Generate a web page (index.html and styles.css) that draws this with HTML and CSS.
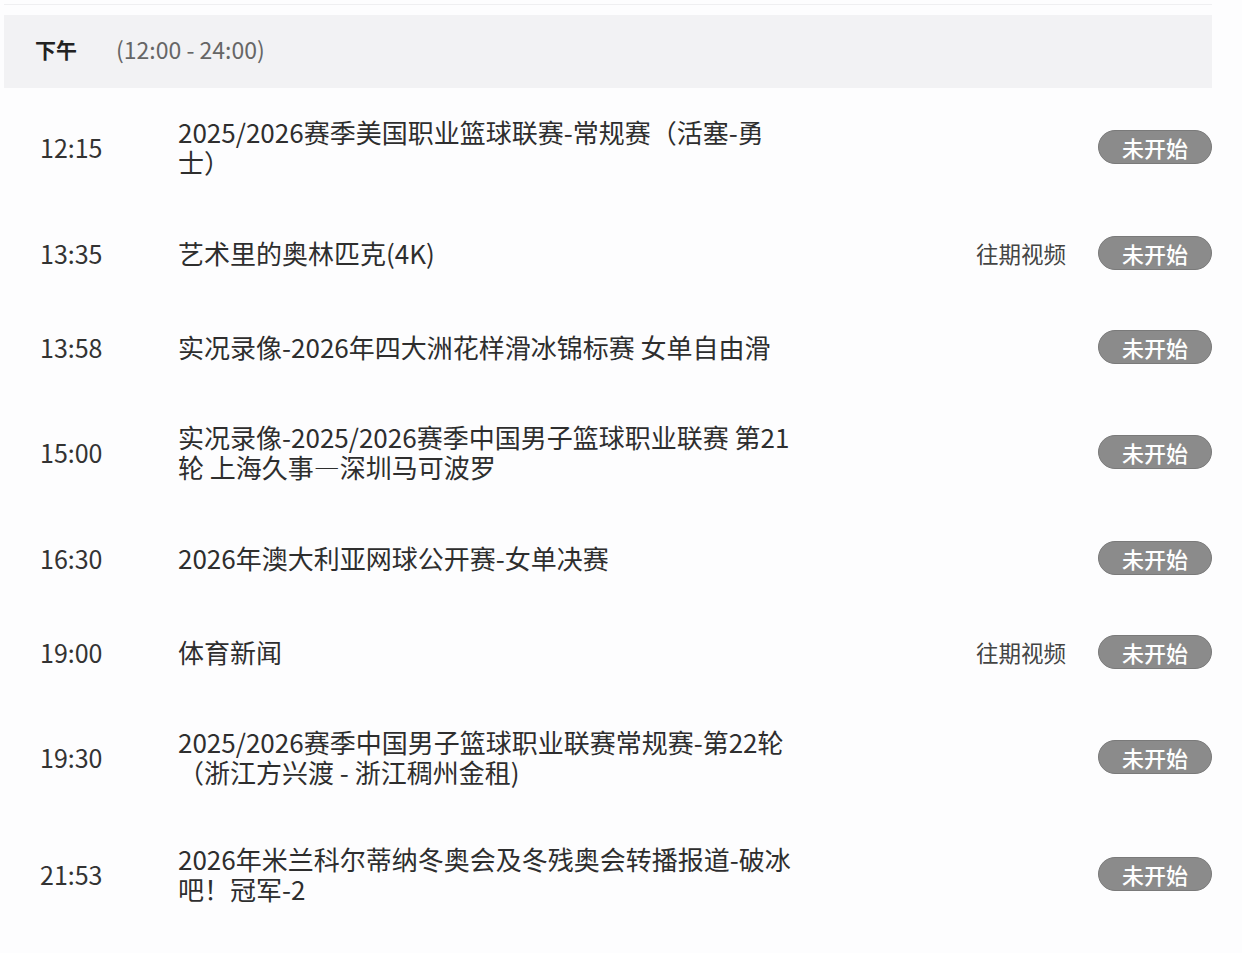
FILE: index.html
```html
<!DOCTYPE html>
<html lang="zh-CN">
<head>
<meta charset="utf-8">
<title>节目单</title>
<link rel="stylesheet" href="styles.css">
</head>
<body>
<div class="page">
  <div class="schedule">
    <div class="period">
      <span class="period-name">下午</span>
      <span class="period-range">(12:00 - 24:00)</span>
    </div>
    <ul class="list">
      <li class="row">
        <span class="time">12:15</span>
        <span class="title">2025/2026赛季美国职业篮球联赛-常规赛（活塞-勇士）</span>
        <span class="extra"></span>
        <span class="badge">未开始</span>
      </li>
      <li class="row">
        <span class="time">13:35</span>
        <span class="title">艺术里的奥林匹克(4K)</span>
        <span class="extra">往期视频</span>
        <span class="badge">未开始</span>
      </li>
      <li class="row">
        <span class="time">13:58</span>
        <span class="title">实况录像-2026年四大洲花样滑冰锦标赛 女单自由滑</span>
        <span class="extra"></span>
        <span class="badge">未开始</span>
      </li>
      <li class="row">
        <span class="time">15:00</span>
        <span class="title">实况录像-2025/2026赛季中国男子篮球职业联赛 第21轮 上海久事—深圳马可波罗</span>
        <span class="extra"></span>
        <span class="badge">未开始</span>
      </li>
      <li class="row">
        <span class="time">16:30</span>
        <span class="title">2026年澳大利亚网球公开赛-女单决赛</span>
        <span class="extra"></span>
        <span class="badge">未开始</span>
      </li>
      <li class="row">
        <span class="time">19:00</span>
        <span class="title">体育新闻</span>
        <span class="extra">往期视频</span>
        <span class="badge">未开始</span>
      </li>
      <li class="row">
        <span class="time">19:30</span>
        <span class="title">2025/2026赛季中国男子篮球职业联赛常规赛-第22轮（浙江方兴渡 - 浙江稠州金租)</span>
        <span class="extra"></span>
        <span class="badge">未开始</span>
      </li>
      <li class="row">
        <span class="time">21:53</span>
        <span class="title">2026年米兰科尔蒂纳冬奥会及冬残奥会转播报道-破冰吧！冠军-2</span>
        <span class="extra"></span>
        <span class="badge">未开始</span>
      </li>
    </ul>
  </div>
</div>
</body>
</html>
```
FILE: styles.css
```css
* { box-sizing: border-box; }
html, body { margin: 0; padding: 0; background: #fdfdfe; }
body {
  font-family: "Noto Sans CJK SC", "Noto Sans", sans-serif;
  color: #333;
}
.page {
  padding: 4px 30px 0 4px;
}
.schedule {
  border-top: 1px solid #efeff1;
  padding-top: 10px;
}
.period {
  height: 73px;
  background: #f2f2f4;
  display: flex;
  align-items: center;
  padding-left: 31px;
  padding-bottom: 6px;
}
.period-name {
  font-size: 21px;
  font-weight: 700;
  color: #222;
  margin-right: 39px;
}
.period-range {
  font-size: 23px;
  color: #666;
}
.list {
  list-style: none;
  margin: 0;
  padding: 0;
}
.row {
  display: flex;
  align-items: center;
  padding: 29px 0 28px;
  min-height: 94px;
}
.time {
  width: 174px;
  padding-left: 36px;
  font-size: 25px;
  color: #333;
  flex: none;
}
.title {
  width: 617px;
  margin-right: 11px;
  font-size: 26px;
  line-height: 30px;
  color: #2e2e2e;
  flex: none;
}
.extra {
  flex: 1;
  text-align: right;
  font-size: 22.5px;
  color: #444;
  padding-right: 32px;
}
.badge {
  flex: none;
  width: 114px;
  height: 34px;
  border-radius: 17px;
  background: #8b8b8b;
  border: 1px solid #7a7a7a;
  color: #fff;
  font-size: 22px;
  font-weight: 500;
  display: flex;
  align-items: center;
  justify-content: center;
}
```
